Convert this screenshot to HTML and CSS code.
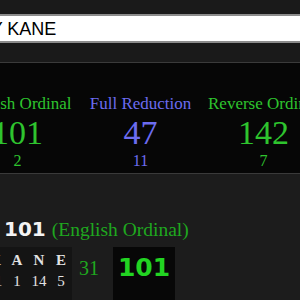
FILE: index.html
```html
<!DOCTYPE html>
<html lang="en">

<head>
  <meta charset="UTF-8" />
  <meta name="viewport" content="width=device-width, initial-scale=1.0" />
  <title>Gematria - HARRY KANE</title>
  <link rel="stylesheet" href="styles.css">
</head>

<body>
  <div class="top">
    <div class="name-box">HARRY KANE</div>
  </div>

  <div class="panel">
    <div class="cipher green">
      <div class="cipher-name">English Ordinal</div>
      <div class="cipher-value">101</div>
      <div class="cipher-words">2</div>
    </div>
    <div class="cipher blue">
      <div class="cipher-name">Full Reduction</div>
      <div class="cipher-value">47</div>
      <div class="cipher-words">11</div>
    </div>
    <div class="cipher green">
      <div class="cipher-name">Reverse Ordinal</div>
      <div class="cipher-value">142</div>
      <div class="cipher-words">7</div>
    </div>
  </div>

  <div class="breakdown">
    <div class="total">
      <span class="total-value">101</span>
      <span class="total-cipher">(English Ordinal)</span>
    </div>

    <div class="letters-row">
      <div class="word">
        <div class="cell"><span class="ch">K</span><span class="num">11</span></div>
        <div class="cell"><span class="ch">A</span><span class="num">1</span></div>
        <div class="cell"><span class="ch">N</span><span class="num">14</span></div>
        <div class="cell"><span class="ch">E</span><span class="num">5</span></div>
      </div>
      <div class="word-sum">31</div>
      <div class="grand-sum">101</div>
    </div>
  </div>
</body>

</html>
```

FILE: styles.css
```css
body {
  margin: 0;
  width: 300px;
  height: 300px;
  overflow: hidden;
  background-color: #1c1c1c;
  font-family: 'Liberation Serif', serif;
}

.top {
  background-color: #1a1a1a;
  padding: 14px 0 19px;
}

.name-box {
  margin-left: -66px;
  width: 420px;
  height: 25px;
  padding-left: 6px;
  background: #fff;
  border-top: 2px solid #8c8c8c;
  border-bottom: 2px solid #8c8c8c;
  color: #000;
  font-family: 'Liberation Sans', sans-serif;
  font-size: 18px;
  line-height: 26px;
}

.panel {
  display: flex;
  margin-left: -44px;
  width: 500px;
  height: 112px;
  box-sizing: border-box;
  padding-top: 31px;
  background: #060606;
  border-top: 1px solid #3a3a3a;
  border-bottom: 1px solid #3a3a3a;
}

.cipher {
  width: 123px;
  text-align: center;
}

.cipher-name {
  font-size: 17px;
  line-height: 20px;
}

.cipher-value {
  font-size: 34px;
  line-height: 34px;
  margin-top: 2px;
}

.cipher-words {
  font-size: 16px;
  line-height: 18px;
  margin-top: 2px;
}

.green { color: #2ec42e; }
.blue { color: #6c6cf0; }

.breakdown {
  padding-top: 43px;
}

.total {
  display: flex;
  align-items: baseline;
  gap: 6px;
  padding-left: 4px;
  line-height: 24px;
}

.total-value {
  color: #f4f4f4;
  font-family: 'DejaVu Sans', sans-serif;
  font-weight: bold;
  font-size: 20px;
}

.total-cipher {
  color: #1fa81f;
  font-size: 19.5px;
}

.letters-row {
  display: flex;
  margin-top: 5px;
  margin-left: -16px;
  height: 60px;
}

.word {
  display: flex;
  background: #141414;
}

.cell {
  width: 22px;
  display: flex;
  flex-direction: column;
  align-items: center;
  padding-top: 5px;
  color: #e2e2e2;
  font-size: 15px;
}

.ch {
  font-weight: bold;
  line-height: 16px;
}

.num {
  line-height: 16px;
  margin-top: 5px;
}

.word-sum {
  width: 34px;
  text-align: center;
  color: #1fa81f;
  font-size: 20px;
  line-height: 22px;
  padding-top: 10px;
}

.grand-sum {
  margin-left: 7px;
  width: 62px;
  background: #070707;
  text-align: center;
  color: #22d422;
  font-family: 'DejaVu Sans', sans-serif;
  font-weight: bold;
  font-size: 25px;
  line-height: 30px;
  padding-top: 6px;
}
```
